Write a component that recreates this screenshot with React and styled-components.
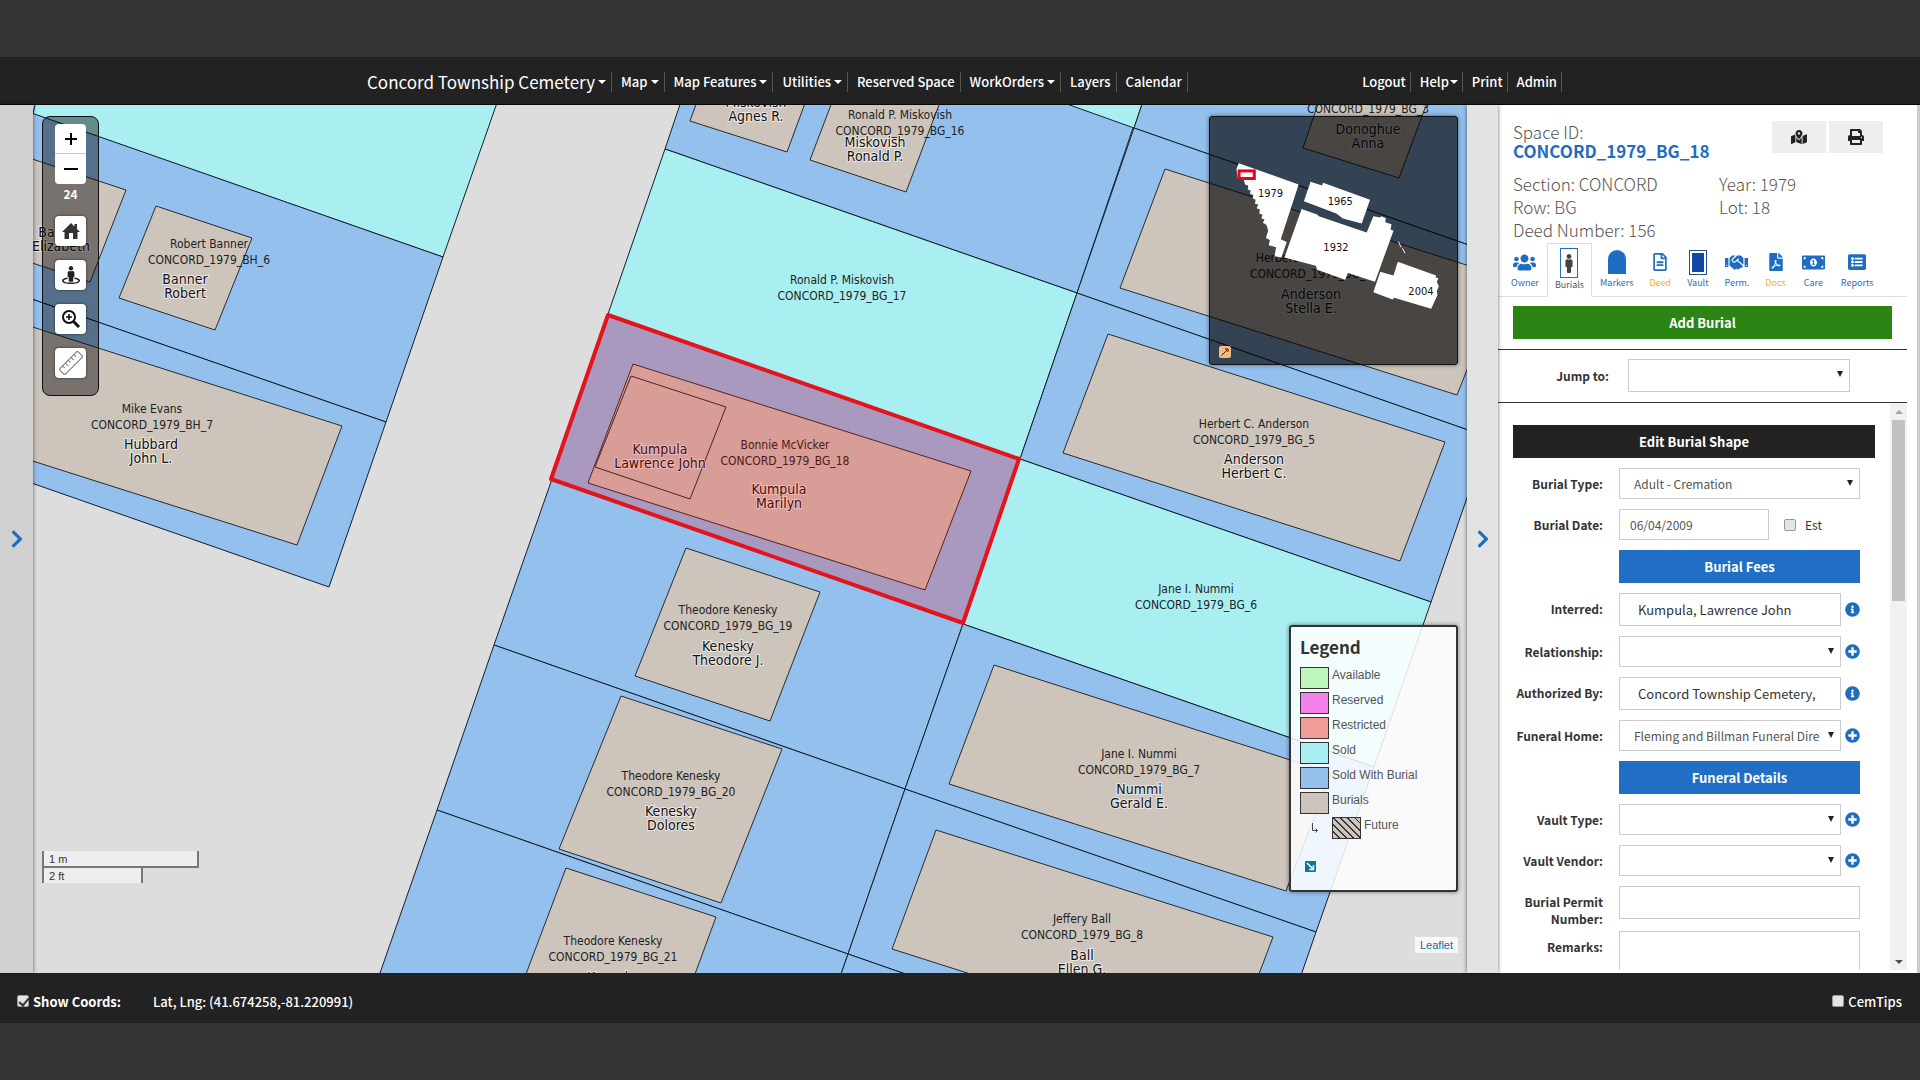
import { useState } from 'react';
import styled, { createGlobalStyle, css } from 'styled-components';
import {
  FaChevronRight,
  FaFilePdf,
  FaHandshake,
  FaInfoCircle,
  FaListAlt,
  FaMale,
  FaMapMarkedAlt,
  FaMoneyBillAlt,
  FaPlusCircle,
  FaPrint,
  FaRegFileAlt,
  FaStreetView,
  FaUsers,
} from 'react-icons/fa';

const GlobalStyle = createGlobalStyle`
  * {
    box-sizing: border-box;
  }

  body {
    margin: 0;
    background-color: #333;
    font-family: "Noto Sans CJK SC", "Noto Sans", sans-serif;
    font-size: 13px;
    line-height: 17px;
    color: #333;
  }

  button, input, select, textarea {
    margin: 0;
    font-family: inherit;
  }

  a {
    color: inherit;
    text-decoration: none;
  }
`;

const Page = styled.div`
  display: flex;
  flex-direction: column;
  height: 100vh;
  padding-block: 57px;
`;

const Header = styled.header`
  flex: none;
  height: 48px;
  padding-top: 2px;
  border-bottom: 1px solid #080808;
  background-color: #222;
`;

const HeaderInner = styled.nav`
  display: flex;
  justify-content: space-between;
  align-items: center;
  max-width: 1204px;
  height: 100%;
  margin-inline: auto;
`;

const Menu = styled.ul`
  display: flex;
  align-items: center;
  margin: 0;
  padding: 0;
  list-style: none;
`;

const MenuItem = styled.li`
  display: flex;
  align-items: center;
  height: 20px;
  padding-right: ${({ $tight }) => ($tight ? '4px' : '5px')};
  padding-left: 9px;
  border-right: 1px solid #555;
`;

const MenuLink = styled.a`
  display: flex;
  align-items: center;
  gap: ${({ $tight }) => ($tight ? '1px' : '3px')};
  font-size: ${({ $brand }) => ($brand ? '17px' : '13px')};
  font-weight: ${({ $brand }) => ($brand ? '400' : '500')};
  line-height: 20px;
  color: #FFF;
  white-space: nowrap;
`;

const Caret = styled.span`
  border-top: 4px solid #FFF;
  border-inline: 4px solid transparent;
`;

const Main = styled.main`
  display: flex;
  flex: 1;
  min-height: 0;
`;

const Strip = styled.button`
  flex: none;
  display: flex;
  justify-content: center;
  align-items: center;
  width: ${({ $right }) => ($right ? '31px' : '33px')};
  padding: 0;
  border: none;
  background-color: ${({ $right }) => ($right ? '#e3e3e3' : '#d0d0d0')};
  box-shadow: 0 0 4px rgba(0, 0, 0, .6);
  font-size: 20px;
  color: #1f6dc1;
  z-index: 1;
`;

const MapArea = styled.section`
  position: relative;
  flex: 1;
  min-width: 0;
  background-color: #ddd;
  overflow: hidden;
`;

const MapSvg = styled.svg`
  display: block;
  width: 100%;
  height: 100%;
`;

const lotColors = {
  sold: '#a9eff2',
  burial: '#94c0ee',
};

const Lot = styled.polygon`
  fill: ${({ $kind }) => lotColors[$kind]};
  stroke: #10202c;
  stroke-width: 1;
`;

const Grave = styled.polygon`
  fill: #cdc5bc;
  stroke: #2b2b2b;
  stroke-width: 1;
`;

const Selection = styled.polygon`
  fill: rgba(255, 0, 0, .2);
  stroke: #e3141c;
  stroke-width: 4;
  stroke-linejoin: round;
`;

const OwnerText = styled.text`
  font-family: "DejaVu Sans Condensed", "Noto Sans", sans-serif;
  font-size: 12px;
  text-anchor: middle;
  fill: #222;
`;

const NameText = styled.text`
  font-family: "DejaVu Sans Condensed", "Noto Sans", sans-serif;
  font-size: 14px;
  text-anchor: middle;
  fill: #111;
  stroke: rgba(255, 255, 255, .6);
  stroke-width: 2;
  paint-order: stroke;
`;

const Toolbar = styled.div`
  position: absolute;
  top: 11px;
  left: 9px;
  display: flex;
  flex-direction: column;
  align-items: center;
  gap: 14px;
  padding: 7px 12px 17px;
  border: 1px solid #111;
  border-radius: 8px;
  background-color: rgba(0, 0, 0, .42);
`;

const ZoomGroup = styled.div`
  display: flex;
  flex-direction: column;
  align-items: center;
  width: 31px;
`;

const ToolButton = styled.button`
  display: flex;
  justify-content: center;
  align-items: center;
  width: 31px;
  height: 30px;
  padding: 0;
  border: none;
  border-radius: 4px;
  background-color: #FFF;
  box-shadow: 0 0 3px rgba(0, 0, 0, .6);
  color: #222;
  font-size: 18px;

  ${ZoomGroup} & {
    box-shadow: none;
  }

  ${ZoomGroup} &:first-child {
    border-bottom: 1px solid #ccc;
    border-radius: 4px 4px 0 0;
  }

  ${ZoomGroup} &:nth-child(2) {
    border-radius: 0 0 4px 4px;
  }
`;

const ZoomLevel = styled.span`
  margin-top: 1px;
  font-size: 12px;
  font-weight: bold;
  color: #FFF;
`;

const Scale = styled.div`
  position: absolute;
  bottom: 90px;
  left: 9px;
  font-family: "Liberation Sans", sans-serif;
  font-size: 11px;
  line-height: 14px;
`;

const ScaleLine = styled.div`
  width: ${({ $width }) => $width};
  padding: 1px 5px 0;
  border-inline: 2px solid #777;
  background-color: rgba(255, 255, 255, .5);

  &:first-child {
    border-bottom: 2px solid #777;
  }
`;

const MiniMap = styled.div`
  position: absolute;
  top: 11px;
  right: 9px;
  width: 249px;
  height: 249px;
  border: 1px solid #111;
  border-radius: 3px;
  background-color: rgba(0, 0, 0, .65);
  box-shadow: 0 0 4px rgba(0, 0, 0, .5);
`;

const MiniText = styled.text`
  font-family: "DejaVu Sans", sans-serif;
  font-size: 30px;
  text-anchor: middle;
  fill: #111;
`;

const MiniToggle = styled.button`
  position: absolute;
  bottom: 6px;
  left: 9px;
  display: flex;
  width: 12px;
  height: 12px;
  padding: 0;
  border: none;
  border-radius: 2px;
  background-color: #f9b97a;
`;

const LegendBox = styled.div`
  position: absolute;
  right: 9px;
  bottom: 81px;
  width: 169px;
  padding: 10px 9px 18px;
  border: 2px solid #333;
  border-radius: 3px;
  background-color: rgba(255, 255, 255, .86);
  box-shadow: 0 0 4px rgba(0, 0, 0, .5);
`;

const LegendTitle = styled.h2`
  margin: 0 0 10px;
  font-size: 17px;
  line-height: 20px;
`;

const LegendList = styled.ul`
  display: flex;
  flex-direction: column;
  gap: 3px;
  margin: 0 0 22px;
  padding: 0;
  list-style: none;
`;

const LegendItem = styled.li`
  display: flex;
  align-items: flex-start;
  gap: 3px;
  height: 22px;
  font-family: "Liberation Sans", sans-serif;
  font-size: 12px;
  color: #555;
`;

const Swatch = styled.span`
  width: 29px;
  height: 22px;
  border: 1px solid #333;
  background: ${({ $fill }) => $fill};
`;

const SubArrow = styled.span`
  display: flex;
  justify-content: center;
  align-items: center;
  width: 29px;
  height: 22px;
`;

const LegendToggle = styled.button`
  display: block;
  width: 11px;
  height: 11px;
  margin-left: 5px;
  padding: 0;
  border: none;
  border-radius: 1px;
  background-color: #0d73a0;

  svg {
    display: block;
  }
`;

const Attribution = styled.a`
  position: absolute;
  right: 9px;
  bottom: 20px;
  padding: 0 5px;
  background-color: rgba(255, 255, 255, .75);
  font-family: "Liberation Sans", sans-serif;
  font-size: 11px;
  line-height: 16px;
  color: #0078a8;
`;

const Panel = styled.aside`
  flex: none;
  display: flex;
  flex-direction: column;
  width: 422px;
  padding-right: 10px;
  border-right: 3px solid #ccc;
  background-color: #FFF;
`;

const Summary = styled.div`
  display: grid;
  grid-template-columns: 206px 1fr;
  padding: 17px 24px 2px 15px;
  font-size: 17px;
  font-weight: 300;
  line-height: 23px;
  color: #555;
`;

const Space = styled.div`
  padding-bottom: 12px;
  line-height: 19px;
`;

const SpaceLink = styled.a`
  display: block;
  font-size: 17px;
  font-weight: bold;
  color: #1f6dc1;
`;

const SummaryActions = styled.div`
  display: flex;
  justify-content: flex-end;
  gap: 3px;
  margin-top: -1px;
`;

const ActionButton = styled.button`
  display: flex;
  justify-content: center;
  align-items: center;
  width: 54px;
  height: 32px;
  padding: 0;
  border: none;
  background-color: #eee;
  font-size: 16px;
  color: #222;
`;

const Tabs = styled.ul`
  flex: none;
  display: flex;
  height: 54px;
  margin: 0;
  padding: 0 0 0 5px;
  border-bottom: 1px solid #ddd;
  list-style: none;
`;

const Tab = styled.a`
  display: flex;
  flex-direction: column;
  align-items: center;
  height: 54px;
  padding: 4px 7px 0;
  border: 1px solid transparent;
  font-size: 9px;
  line-height: 14px;
  color: ${({ $warn }) => ($warn ? '#f0ad1e' : '#1f6dc1')};

  ${({ $active }) => $active && css`
    border-color: #ddd;
    border-bottom-color: #FFF;
    background-color: #FFF;
    color: #555;
  `}
`;

const TabIcon = styled.span`
  display: flex;
  justify-content: center;
  align-items: center;
  height: ${({ $active }) => ($active ? '30px' : '28px')};
  color: ${({ $active }) => ($active ? '#444' : '#1f6dc1')};
`;

const FigureBox = styled.span`
  display: flex;
  justify-content: center;
  align-items: center;
  width: 18px;
  height: 30px;
  border: 1px solid #1f6dc1;
`;

const Stone = styled.span`
  width: 18px;
  height: 24px;
  border-radius: 9px 9px 0 0;
  background-color: #1f6dc1;
`;

const VaultShape = styled.span`
  width: 18px;
  height: 25px;
  border: 1px solid #1f4d91;
  background-color: #0f48a4;
  box-shadow: inset 0 0 0 2px #FFF;
`;

const buttonColors = {
  green: '#2c8414',
  blue: '#216fc4',
  dark: '#222',
};

const WideButton = styled.button`
  flex: none;
  width: 100%;
  height: 33px;
  padding: 0;
  border: none;
  background-color: ${({ $color }) => buttonColors[$color]};
  font-size: 13px;
  font-weight: bold;
  line-height: 20px;
  color: #FFF;
`;

const AddBar = styled.div`
  padding: 9px 15px 10px;
  border-bottom: 1px solid #333;
`;

const JumpBar = styled.div`
  display: grid;
  grid-template-columns: 111px 222px;
  align-items: center;
  gap: 19px;
  padding: 9px 0 10px;
  border-bottom: 1px solid #333;
  font-size: 12px;
  font-weight: bold;
  text-align: right;
`;

const Scroller = styled.div`
  display: flex;
  flex: 1;
  min-height: 0;
  margin-bottom: 3px;
`;

const Form = styled.form`
  display: flex;
  flex: 1;
  flex-direction: column;
  gap: 10px;
  padding: 22px 15px 0;
  overflow: hidden;
`;

const Row = styled.div`
  flex: none;
  display: grid;
  grid-template-columns: 90px 1fr;
  align-items: start;
  gap: 16px;
  padding-right: 15px;
`;

const Label = styled.label`
  margin: 7px 0 -6px -12px;
  font-size: 12px;
  font-weight: bold;
  text-align: right;
`;

const Controls = styled.div`
  grid-column: 2;
  display: flex;
  align-items: center;
  gap: 4px;
`;

const SelectBox = styled.div`
  position: relative;
  flex: 1;
  min-width: 0;

  &::after {
    content: "";
    position: absolute;
    top: 12px;
    right: 7px;
    border-top: 6px solid #222;
    border-inline: 3px solid transparent;
    pointer-events: none;
  }
`;

const Select = styled.select`
  display: block;
  width: 100%;
  height: ${({ $tall }) => ($tall ? '33px' : '31px')};
  padding: 0 18px 0 14px;
  border: 1px solid #ccc;
  border-radius: 0;
  background-color: #FFF;
  font-size: 12px;
  color: #555;
  appearance: none;
`;

const Input = styled.input`
  flex: ${({ $short }) => ($short ? '0 0 150px' : '1')};
  min-width: 0;
  height: ${({ $short }) => ($short ? '31px' : '33px')};
  padding: ${({ $short }) => ($short ? '0 10px' : '0 18px')};
  border: 1px solid #ccc;
  background-color: #FFF;
  font-size: ${({ $short }) => ($short ? '12px' : '13px')};
  color: ${({ $short }) => ($short ? '#555' : '#333')};
`;

const Textarea = styled.textarea`
  flex: 1;
  height: 80px;
  border: 1px solid #ccc;
  background-color: #FFF;
  resize: none;
`;

const EstLabel = styled.label`
  display: flex;
  align-items: center;
  gap: 9px;
  padding-left: 11px;
  font-size: 12px;
`;

const Checkbox = styled.input`
  position: relative;
  width: 12px;
  height: 12px;
  border: 1px solid #999;
  border-radius: 2px;
  background-color: #e4e4e4;
  appearance: none;

  &:checked::after {
    content: "";
    position: absolute;
    top: 0;
    left: 3px;
    width: 4px;
    height: 8px;
    border: solid #333;
    border-width: 0 2px 2px 0;
    transform: rotate(40deg);
  }
`;

const IconButton = styled.button`
  display: flex;
  width: 15px;
  height: 15px;
  padding: 0;
  border: none;
  background: none;
  font-size: 15px;
  color: #1f6dc1;
`;

const Scrollbar = styled.div`
  flex: none;
  display: flex;
  flex-direction: column;
  align-items: center;
  width: 17px;
  background-color: #f1f1f1;
`;

const ScrollArrow = styled.span`
  flex: none;
  margin-block: 7px 6px;
  border-inline: 4px solid transparent;
  border-bottom: ${({ $down }) => ($down ? 'none' : '4px solid #a3a3a3')};
  border-top: ${({ $down }) => ($down ? '4px solid #505050' : 'none')};
`;

const ScrollTrack = styled.div`
  flex: 1;
  width: 13px;
`;

const ScrollThumb = styled.div`
  height: 34%;
  background-color: #c1c1c1;
`;

const Footer = styled.footer`
  flex: none;
  display: flex;
  align-items: center;
  gap: 32px;
  height: 50px;
  padding: 6px 18px 0 17px;
  background-color: #222;
  font-size: 13px;
  font-weight: 500;
  color: #FFF;
`;

const FooterLabel = styled.label`
  display: flex;
  align-items: center;
  gap: 4px;
  font-weight: ${({ $bold }) => ($bold ? 'bold' : '500')};

  &:last-child {
    margin-left: auto;
  }
`;

const leftMenu = [
  { text: 'Concord Township Cemetery', caret: true, brand: true },
  { text: 'Map', caret: true },
  { text: 'Map Features', caret: true },
  { text: 'Utilities', caret: true },
  { text: 'Reserved Space' },
  { text: 'WorkOrders', caret: true },
  { text: 'Layers' },
  { text: 'Calendar' },
];

const rightMenu = [
  { text: 'Logout' },
  { text: 'Help', caret: true },
  { text: 'Print' },
  { text: 'Admin' },
];

const lots = [
  { kind: 'sold', points: '35,105 24,60 512,60 443,257 33,114' },
  { kind: 'burial', points: '20,109 443,257 386,422 20,295' },
  { kind: 'burial', points: '20,295 386,422 329,587 20,479' },
  { kind: 'burial', points: '695,60 1156,60 1077,293 665,149' },
  { kind: 'sold', points: '944,60 1157,60 1134,128' },
  { kind: 'sold', points: '665,149 1077,293 1020,459 608,314' },
  { kind: 'burial', points: '608,314 1020,459 963,624 552,479' },
  { kind: 'burial', points: '552,479 963,624 905,789 494,645' },
  { kind: 'burial', points: '494,645 905,789 848,954 437,810' },
  { kind: 'burial', points: '437,810 848,954 791,1119 380,973' },
  { kind: 'burial', points: '1157,60 1620,60 1546,272 1134,128' },
  { kind: 'burial', points: '1134,128 1546,272 1488,437 1077,293' },
  { kind: 'burial', points: '1077,293 1488,437 1431,602 1020,459' },
  { kind: 'sold', points: '1020,459 1431,602 1374,767 963,624' },
  { kind: 'burial', points: '963,624 1374,767 1316,932 905,789' },
  { kind: 'burial', points: '905,789 1316,932 1259,1097 848,954' },
  { kind: 'burial', points: '848,954 1259,1097 1202,1262 791,1119' },
];

const graves = [
  '20,155 126,190 90,282 20,259',
  '156,206 252,238 215,330 119,298',
  '20,323 342,426 297,545 20,457',
  '712,60 690,121 787,152 821,60',
  '848,60 810,160 906,192 956,60',
  '1165,169 1504,277 1457,395 1120,288',
  '1108,334 1445,442 1400,561 1063,453',
  '994,665 1331,773 1286,891 949,784',
  '936,830 1273,937 1228,1056 892,949',
  '1333,60 1303,148 1399,178 1443,60',
  '633,364 971,471 925,590 588,483',
  '631,376 726,407 690,499 595,467',
  '686,548 820,592 770,721 635,676',
  '621,696 782,749 721,903 559,849',
  '566,868 716,917 656,1080 486,1080',
];

const owners = [
  { x: 209, y: 248, name: 'Robert Banner', id: 'BH_6' },
  { x: 152, y: 413, name: 'Mike Evans', id: 'BH_7' },
  { x: 900, y: 119, name: 'Ronald P. Miskovish', id: 'BG_16' },
  { x: 842, y: 284, name: 'Ronald P. Miskovish', id: 'BG_17' },
  { x: 785, y: 449, name: 'Bonnie McVicker', id: 'BG_18' },
  { x: 728, y: 614, name: 'Theodore Kenesky', id: 'BG_19' },
  { x: 671, y: 780, name: 'Theodore Kenesky', id: 'BG_20' },
  { x: 613, y: 945, name: 'Theodore Kenesky', id: 'BG_21' },
  { x: 1368, y: 97, name: 'Donoghue', id: 'BG_3' },
  { x: 1311, y: 262, name: 'Herbert C. Anderson', id: 'BG_4' },
  { x: 1254, y: 428, name: 'Herbert C. Anderson', id: 'BG_5' },
  { x: 1196, y: 593, name: 'Jane I. Nummi', id: 'BG_6' },
  { x: 1139, y: 758, name: 'Jane I. Nummi', id: 'BG_7' },
  { x: 1082, y: 923, name: 'Jeffery Ball', id: 'BG_8' },
];

const names = [
  { x: 61, y: 237, last: 'Banner', first: 'Elizabeth' },
  { x: 185, y: 284, last: 'Banner', first: 'Robert' },
  { x: 151, y: 449, last: 'Hubbard', first: 'John L.' },
  { x: 756, y: 107, last: 'Miskovish', first: 'Agnes R.' },
  { x: 875, y: 147, last: 'Miskovish', first: 'Ronald P.' },
  { x: 660, y: 454, last: 'Kumpula', first: 'Lawrence John' },
  { x: 779, y: 494, last: 'Kumpula', first: 'Marilyn' },
  { x: 728, y: 651, last: 'Kenesky', first: 'Theodore J.' },
  { x: 671, y: 816, last: 'Kenesky', first: 'Dolores' },
  { x: 613, y: 982, last: 'Kenesky', first: 'Theodore' },
  { x: 1368, y: 134, last: 'Donoghue', first: 'Anna' },
  { x: 1311, y: 299, last: 'Anderson', first: 'Stella E.' },
  { x: 1254, y: 464, last: 'Anderson', first: 'Herbert C.' },
  { x: 1139, y: 794, last: 'Nummi', first: 'Gerald E.' },
  { x: 1082, y: 960, last: 'Ball', first: 'Ellen G.' },
];

const legend = [
  { text: 'Available', fill: '#bdf5bd' },
  { text: 'Reserved', fill: '#f582ec' },
  { text: 'Restricted', fill: '#f29c9a' },
  { text: 'Sold', fill: '#a9eff2' },
  { text: 'Sold With Burial', fill: '#94c0ee' },
  { text: 'Burials', fill: '#cdc5bc' },
];

const hatch = 'repeating-linear-gradient(45deg, #cdc5bc 0 4px, #333 4px 5px)';

const tabs = [
  { text: 'Owner', icon: <FaUsers size={23} /> },
  { text: 'Burials', icon: <FigureBox><FaMale size={19} /></FigureBox>, active: true },
  { text: 'Markers', icon: <Stone /> },
  { text: 'Deed', icon: <FaRegFileAlt size={18} />, warn: true },
  { text: 'Vault', icon: <VaultShape /> },
  { text: 'Perm.', icon: <FaHandshake size={23} /> },
  { text: 'Docs', icon: <FaFilePdf size={18} />, warn: true },
  { text: 'Care', icon: <FaMoneyBillAlt size={23} /> },
  { text: 'Reports', icon: <FaListAlt size={18} /> },
];

function MenuList({ items, tight = false }) {
  return (
    <Menu>
      {items.map(({ text, caret, brand }) => (
        <MenuItem key={text} $tight={tight}>
          <MenuLink href="#" $brand={brand} $tight={tight}>
            {text}
            {caret && <Caret />}
          </MenuLink>
        </MenuItem>
      ))}
    </Menu>
  );
}

function CemeteryMap() {
  return (
    <MapSvg viewBox="33 105 1434 868" preserveAspectRatio="xMinYMin slice">
      {lots.map(({ kind, points }) => <Lot key={points} $kind={kind} points={points} />)}
      {graves.map((points) => <Grave key={points} points={points} />)}
      {owners.map(({
        x, y, name, id,
      }) => (
        <OwnerText key={id} x={x} y={y}>
          {name}
          <tspan x={x} dy="16">{`CONCORD_1979_${id}`}</tspan>
        </OwnerText>
      ))}
      {names.map(({
        x, y, last, first,
      }) => (
        <NameText key={`${last} ${first}`} x={x} y={y}>
          {last}
          <tspan x={x} dy="14">{first}</tspan>
        </NameText>
      ))}
      <Selection points="608,315 1019,459 963,623 551,479" />
    </MapSvg>
  );
}

function Tools() {
  return (
    <Toolbar>
      <ZoomGroup>
        <ToolButton type="button" aria-label="Zoom in">
          <svg width="14" height="14" viewBox="0 0 14 14" stroke="#000" strokeWidth="2">
            <path d="M7 1v12M1 7h12" />
          </svg>
        </ToolButton>
        <ToolButton type="button" aria-label="Zoom out">
          <svg width="14" height="14" viewBox="0 0 14 14" stroke="#000" strokeWidth="2">
            <path d="M0 7h14" />
          </svg>
        </ToolButton>
        <ZoomLevel>24</ZoomLevel>
      </ZoomGroup>
      <ToolButton type="button" aria-label="Home">
        <svg width="18" height="16" viewBox="0 0 18 16" fill="#333">
          <path d="M9 0L18 9H15.500V16H11V10H7V16H2.500V9H0zM12.500 1H15V6L12.500 3.500z" />
        </svg>
      </ToolButton>
      <ToolButton type="button" aria-label="Locate"><FaStreetView /></ToolButton>
      <ToolButton type="button" aria-label="Zoom to area">
        <svg width="20" height="20" viewBox="0 0 20 20" fill="none" stroke="#111" strokeWidth="2">
          <circle cx="8" cy="8" r="6" />
          <path d="M5 8h6M8 5v6" strokeWidth="1.6" />
          <path d="M12.500 12.500L18 18" strokeWidth="3" />
        </svg>
      </ToolButton>
      <ToolButton type="button" aria-label="Measure">
        <svg width="24" height="24" viewBox="0 0 24 24" fill="none" stroke="#777">
          <rect x="-1" y="8" width="26" height="8" rx="1.500" transform="rotate(-45 12 12)" />
          <path d="M4 8v3M8 8v4M12 8v3M16 8v4M20 8v3" transform="rotate(-45 12 12)" />
        </svg>
      </ToolButton>
    </Toolbar>
  );
}

function Overview() {
  return (
    <MiniMap>
      <svg width="100%" height="100%" viewBox="88 78 747 747">
        <g fill="#FFF">
          <path d="M175 218L356 282L302 448L320 456L304 503L283 499L288 472L266 466L269 450L257 444L264 422L259 405L248 398L253 388L243 384L247 374L237 370L239 358L229 354L234 343L224 340L226 328L217 324L219 314L209 310L211 300L202 297L204 286L194 282L190 268L172 262L168 235z" />
          <path d="M392 274L427 285L430 277L572 328L547 400L490 385L470 370L372 333z" />
          <path d="M365 356L412 373L417 378L562 427L582 378L603 382L606 378L620 384L618 396L637 402L634 418L643 422L587 576L505 550L497 570L412 540L408 528L313 503z" />
          <path d="M656 516L772 557L770 563L779 566L774 576L780 590L774 604L776 616L757 658L645 625L640 630L582 608L603 546L643 557z" />
        </g>
        <path d="M658 455L666 472M670 475L678 490" stroke="#FFF" strokeWidth="3" />
        <rect x="176" y="241" width="46" height="23" fill="#FFF" stroke="#f00010" strokeWidth="9" />
        <MiniText x="271" y="320">1979</MiniText>
        <MiniText x="482" y="345">1965</MiniText>
        <MiniText x="469" y="482">1932</MiniText>
        <MiniText x="726" y="617">2004</MiniText>
      </svg>
      <MiniToggle type="button" aria-label="Toggle overview">
        <svg width="12" height="12" viewBox="0 0 12 12" fill="none" stroke="#222">
          <path d="M2.500 9.500L9 3M6 3h3v3" />
        </svg>
      </MiniToggle>
    </MiniMap>
  );
}

function Legend() {
  return (
    <LegendBox>
      <LegendTitle>Legend</LegendTitle>
      <LegendList>
        {legend.map(({ text, fill }) => (
          <LegendItem key={text}>
            <Swatch $fill={fill} />
            {text}
          </LegendItem>
        ))}
        <LegendItem>
          <SubArrow>
            <svg width="8" height="12" viewBox="0 0 8 12" fill="none" stroke="#444">
              <path d="M1.500 1v7.500h5M4.500 6.500l2 2l-2 2" />
            </svg>
          </SubArrow>
          <Swatch $fill={hatch} />
          Future
        </LegendItem>
      </LegendList>
      <LegendToggle type="button" aria-label="Toggle legend">
        <svg width="11" height="11" viewBox="0 0 11 11" fill="none" stroke="#FFF" strokeWidth="1.500">
          <path d="M2 2l6 6M8.500 4v4.500H4" />
        </svg>
      </LegendToggle>
    </LegendBox>
  );
}

function SelectRow({
  id, label, value = '', full = false,
}) {
  return (
    <Row>
      <Label htmlFor={id}>{label}</Label>
      <Controls>
        <SelectBox>
          <Select id={id}>
            <option>{value}</option>
          </Select>
        </SelectBox>
        {!full && (
          <IconButton type="button" aria-label={`Add ${label}`}><FaPlusCircle /></IconButton>
        )}
      </Controls>
    </Row>
  );
}

function PersonRow({ id, label, value }) {
  return (
    <Row>
      <Label htmlFor={id}>{label}</Label>
      <Controls>
        <Input id={id} defaultValue={value} />
        <IconButton type="button" aria-label={`${label} details`}><FaInfoCircle /></IconButton>
      </Controls>
    </Row>
  );
}

function BurialForm() {
  return (
    <Scroller>
      <Form>
        <WideButton type="button" $color="dark">Edit Burial Shape</WideButton>
        <SelectRow id="burial-type" label="Burial Type:" value="Adult - Cremation" full />
        <Row>
          <Label htmlFor="burial-date">Burial Date:</Label>
          <Controls>
            <Input id="burial-date" defaultValue="06/04/2009" $short />
            <EstLabel>
              <Checkbox type="checkbox" />
              Est
            </EstLabel>
          </Controls>
        </Row>
        <Row>
          <Controls>
            <WideButton type="button" $color="blue">Burial Fees</WideButton>
          </Controls>
        </Row>
        <PersonRow id="interred" label="Interred:" value="Kumpula, Lawrence John" />
        <SelectRow id="relationship" label="Relationship:" />
        <PersonRow id="authorized" label="Authorized By:" value="Concord Township Cemetery," />
        <SelectRow id="funeral-home" label="Funeral Home:" value="Fleming and Billman Funeral Dire" />
        <Row>
          <Controls>
            <WideButton type="button" $color="blue">Funeral Details</WideButton>
          </Controls>
        </Row>
        <SelectRow id="vault-type" label="Vault Type:" />
        <SelectRow id="vault-vendor" label="Vault Vendor:" />
        <Row>
          <Label htmlFor="permit">Burial Permit Number:</Label>
          <Controls>
            <Input id="permit" />
          </Controls>
        </Row>
        <Row>
          <Label htmlFor="remarks">Remarks:</Label>
          <Controls>
            <Textarea id="remarks" />
          </Controls>
        </Row>
      </Form>
      <Scrollbar>
        <ScrollArrow />
        <ScrollTrack>
          <ScrollThumb />
        </ScrollTrack>
        <ScrollArrow $down />
      </Scrollbar>
    </Scroller>
  );
}

function SpacePanel() {
  return (
    <Panel>
      <Summary>
        <Space>
          Space ID:
          <SpaceLink href="#">CONCORD_1979_BG_18</SpaceLink>
        </Space>
        <SummaryActions>
          <ActionButton type="button" aria-label="Show on map"><FaMapMarkedAlt /></ActionButton>
          <ActionButton type="button" aria-label="Print"><FaPrint /></ActionButton>
        </SummaryActions>
        <span>Section: CONCORD</span>
        <span>Year: 1979</span>
        <span>Row: BG</span>
        <span>Lot: 18</span>
        <span>Deed Number: 156</span>
      </Summary>
      <Tabs>
        {tabs.map(({
          text, icon, active, warn,
        }) => (
          <li key={text}>
            <Tab href="#" $active={active} $warn={warn}>
              <TabIcon $active={active}>{icon}</TabIcon>
              {text}
            </Tab>
          </li>
        ))}
      </Tabs>
      <AddBar>
        <WideButton type="button" $color="green">Add Burial</WideButton>
      </AddBar>
      <JumpBar>
        <label htmlFor="jump">Jump to:</label>
        <SelectBox>
          <Select id="jump" $tall />
        </SelectBox>
      </JumpBar>
      <BurialForm />
    </Panel>
  );
}

export default function App() {
  const [showCoords, setShowCoords] = useState(true);

  const handleCoordsChange = () => {
    setShowCoords(!showCoords);
  };

  return (
    <Page>
      <GlobalStyle />
      <Header>
        <HeaderInner>
          <MenuList items={leftMenu} />
          <MenuList items={rightMenu} tight />
        </HeaderInner>
      </Header>
      <Main>
        <Strip type="button" aria-label="Open left panel">
          <FaChevronRight />
        </Strip>
        <MapArea>
          <CemeteryMap />
          <Tools />
          <Scale>
            <ScaleLine $width="157px">1 m</ScaleLine>
            <ScaleLine $width="101px">2 ft</ScaleLine>
          </Scale>
          <Overview />
          <Legend />
          <Attribution href="#">Leaflet</Attribution>
        </MapArea>
        <Strip type="button" aria-label="Close right panel" $right>
          <FaChevronRight />
        </Strip>
        <SpacePanel />
      </Main>
      <Footer>
        <FooterLabel $bold>
          <Checkbox type="checkbox" checked={showCoords} onChange={handleCoordsChange} />
          Show Coords:
        </FooterLabel>
        {showCoords && <span>Lat, Lng: (41.674258,-81.220991)</span>}
        <FooterLabel>
          <Checkbox type="checkbox" />
          CemTips
        </FooterLabel>
      </Footer>
    </Page>
  );
}
